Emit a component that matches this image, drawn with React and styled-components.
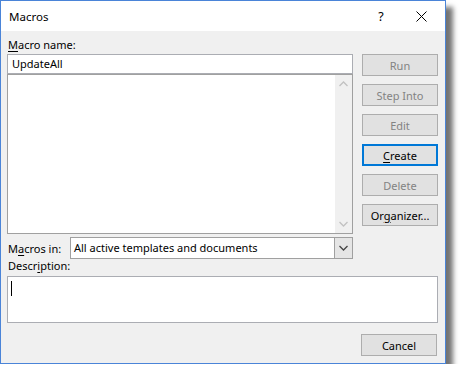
import React from "react";
import styled, { createGlobalStyle } from "styled-components";

const Global = createGlobalStyle`
  html, body {
    margin: 0;
    padding: 0;
    background: #ffffff;
  }
  body {
    font-family: "Noto Sans", "Open Sans", sans-serif;
    font-size: 11px;
    color: #000;
  }
`;

const Window = styled.div`
  width: 446px;
  height: 364px;
  box-sizing: border-box;
  border: 1px solid #4a84d8;
  background: #f0f0f0;
  box-shadow: 7px 7px 5px rgba(0, 0, 0, 0.55);
  display: flex;
  flex-direction: column;
`;

const TitleBar = styled.div`
  height: 30px;
  background: #ffffff;
  display: flex;
  align-items: center;
  padding-left: 8px;
`;

const Title = styled.div`
  flex: 1;
  font-size: 11.5px;
`;

const TitleButton = styled.div`
  width: 40px;
  height: 30px;
  display: flex;
  align-items: center;
  justify-content: center;
  font-size: 12.5px;
  margin-right: ${p => p.$mr || 0}px;
`;

const Body = styled.div`
  padding: 7px 7px 7px 6px;
  display: flex;
  flex-direction: column;
`;

const Top = styled.div`
  display: flex;
  gap: 9px;
`;

const LeftCol = styled.div`
  width: 346px;
  display: flex;
  flex-direction: column;
`;

const Label = styled.div`
  height: ${p => p.$h || 16}px;
  line-height: 14px;
  padding-left: 1px;
  white-space: nowrap;
  u { text-decoration: underline; text-underline-offset: 2px; }
`;

const TextInput = styled.div`
  height: 20px;
  box-sizing: border-box;
  border: 1px solid #abadb3;
  background: #fff;
  padding-left: 4px;
  line-height: 17px;
`;

const ListBox = styled.div`
  height: 160px;
  box-sizing: border-box;
  border: 1px solid #a0a0a0;
  background: #fff;
  display: flex;
  justify-content: flex-end;
`;

const ScrollBar = styled.div`
  width: 17px;
  background: #f0f0f0;
  display: flex;
  flex-direction: column;
  justify-content: space-between;
  align-items: center;
  padding: 6px 0;
`;

const ComboRow = styled.div`
  margin-top: 3px;
  height: 22px;
  display: flex;
  align-items: center;
`;

const ComboLabel = styled.div`
  width: 62px;
  padding-left: 1px;
  u { text-decoration: underline; text-underline-offset: 2px; }
`;

const Combo = styled.div`
  flex: 1;
  height: 22px;
  box-sizing: border-box;
  border: 1px solid #a0a0a0;
  background: #fff;
  display: flex;
  align-items: stretch;
`;

const ComboText = styled.div`
  flex: 1;
  padding-left: 3px;
  line-height: 19px;
`;

const ComboArrow = styled.div`
  width: 17px;
  background: #e5e5e5;
  border-left: 1px solid #a0a0a0;
  display: flex;
  align-items: center;
  justify-content: center;
`;

const RightCol = styled.div`
  width: 76px;
  padding-top: 16px;
  display: flex;
  flex-direction: column;
  gap: 8px;
`;

const Button = styled.div`
  height: 22px;
  box-sizing: border-box;
  border: ${p => (p.$default ? "2px solid #0078d7" : "1px solid #adadad")};
  background: #e1e1e1;
  color: ${p => (p.$disabled ? "#838383" : "#000")};
  display: flex;
  align-items: center;
  justify-content: center;
  white-space: nowrap;
  u { text-decoration: underline; text-underline-offset: 2px; }
`;

const Description = styled.div`
  height: 47px;
  box-sizing: border-box;
  border: 1px solid #abadb3;
  background: #fff;
  padding: 4px 0 0 3px;
`;

const Caret = styled.div`
  width: 1px;
  height: 15px;
  background: #000;
`;

const Footer = styled.div`
  margin-top: 11px;
  display: flex;
  justify-content: flex-end;
  padding-right: 1px;
`;

const FooterButton = styled(Button)`
  width: 76px;
`;

const Chevron = ({ up, color }) => (
  <svg width="9" height="6" viewBox="0 0 9 6">
    <path
      d={up ? "M0.5 5 L4.5 1 L8.5 5" : "M0.5 1 L4.5 5 L8.5 1"}
      fill="none"
      stroke={color}
      strokeWidth="1.3"
    />
  </svg>
);

const buttons = [
  { label: "Run", disabled: true },
  { label: "Step Into", disabled: true },
  { label: "Edit", disabled: true },
  { label: <><u>C</u>reate</>, def: true },
  { label: "Delete", disabled: true },
  { label: <>Or<u>g</u>anizer...</> },
];

export default function App() {
  return (
    <>
      <Global />
      <Window>
        <TitleBar>
          <Title>Macros</Title>
          <TitleButton>?</TitleButton>
          <TitleButton $mr={4}>
            <svg width="11" height="11" viewBox="0 0 11 11">
              <path d="M0.5 0.5 L10.5 10.5 M10.5 0.5 L0.5 10.5" stroke="#000" strokeWidth="1" />
            </svg>
          </TitleButton>
        </TitleBar>
        <Body>
          <Top>
            <LeftCol>
              <Label><u>M</u>acro name:</Label>
              <TextInput>UpdateAll</TextInput>
              <ListBox>
                <ScrollBar>
                  <Chevron up color="#c2c2c2" />
                  <Chevron color="#c2c2c2" />
                </ScrollBar>
              </ListBox>
              <ComboRow>
                <ComboLabel>M<u>a</u>cros in:</ComboLabel>
                <Combo>
                  <ComboText>All active templates and documents</ComboText>
                  <ComboArrow>
                    <Chevron color="#444" />
                  </ComboArrow>
                </Combo>
              </ComboRow>
              <Label $h={17}>Descr<u>i</u>ption:</Label>
            </LeftCol>
            <RightCol>
              {buttons.map((b, i) => (
                <Button key={i} $disabled={b.disabled} $default={b.def}>
                  {b.label}
                </Button>
              ))}
            </RightCol>
          </Top>
          <Description>
            <Caret />
          </Description>
          <Footer>
            <FooterButton>Cancel</FooterButton>
          </Footer>
        </Body>
      </Window>
    </>
  );
}
